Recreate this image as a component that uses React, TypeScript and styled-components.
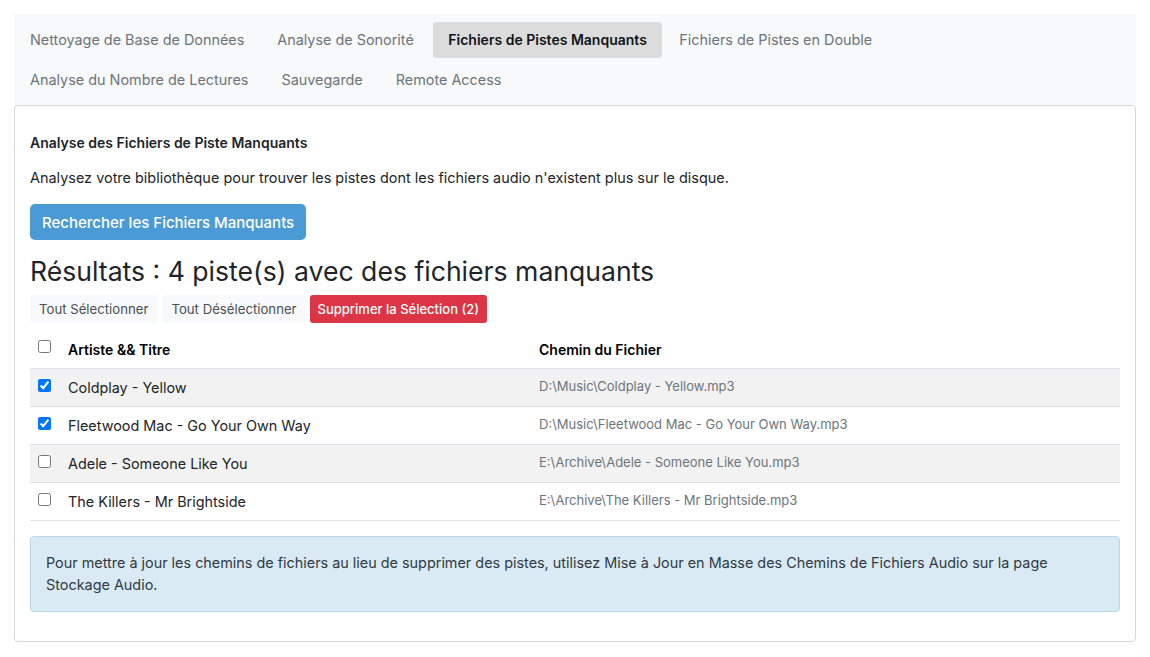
import React from "react";
import styled, { createGlobalStyle } from "styled-components";

const Global = createGlobalStyle`
  html, body { margin: 0; padding: 0; background: #ffffff; }
  body { font-family: Inter, "Noto Sans", "Liberation Sans", sans-serif; color: #212529; font-size: 14px; }
  * { box-sizing: border-box; }
`;

const Page = styled.div`
  padding: 14px 14px 16px 14px;
`;

const TabBar = styled.nav`
  background: #f8f9fa;
  padding: 8px 0 7px 0;
  display: flex;
  flex-direction: column;
  row-gap: 4px;
`;

const TabLine = styled.div`
  display: flex;
  width: 100%;
`;

const Tab = styled.div<{ $active?: boolean }>`
  height: 36px;
  display: flex;
  align-items: center;
  padding: 0 ${(p) => (p.$active ? "15px 1px 15px" : "17px 1px 16px")};
  margin: 0 ${(p) => (p.$active ? "1.5px 0 2.5px" : "0")};
  border-radius: 4px;
  font-size: ${(p) => (p.$active ? "14px" : "14.4px")};
  color: ${(p) => (p.$active ? "#111418" : "#6c757d")};
  font-weight: ${(p) => (p.$active ? 600 : 400)};
  background: ${(p) => (p.$active ? "#dcdcdc" : "transparent")};
  white-space: nowrap;
`;

const Card = styled.section`
  border: 1px solid #d6d8db;
  border-radius: 4px;
  padding: 27px 15px 29px 15px;
  display: flex;
  flex-direction: column;
`;

const Title = styled.h5`
  margin: 0;
  font-size: 14px;
  line-height: 20px;
  font-weight: 600;
  color: #212529;
`;

const Lead = styled.p`
  margin: 15px 0 16px 0;
  font-size: 14.45px;
  line-height: 20px;
  color: #212529;
`;

const PrimaryButton = styled.button`
  align-self: flex-start;
  height: 36px;
  padding: 0 12px;
  border: none;
  border-radius: 5px;
  background: #4a9bd5;
  color: #ffffff;
  font-family: inherit;
  font-size: 15px;
  font-weight: 500;
`;

const ResultsHeading = styled.h3`
  margin: 14px 0 0 0;
  font-size: 26.6px;
  line-height: 34px;
  font-weight: 400;
  color: #212529;
`;

const ButtonRow = styled.div`
  display: flex;
  gap: 5px;
  margin-top: 7px;
`;

const SmallButton = styled.button<{ $danger?: boolean }>`
  height: 28px;
  padding: 0 ${(p) => (p.$danger ? "8px" : "9px")};
  margin-left: ${(p) => (p.$danger ? "-1px" : "0")};
  border: none;
  border-radius: 3px;
  font-family: inherit;
  font-size: ${(p) => (p.$danger ? "13px" : "13.2px")};
  background: ${(p) => (p.$danger ? "#dc3545" : "#f8f9fa")};
  color: ${(p) => (p.$danger ? "#ffffff" : "#495057")};
  font-weight: ${(p) => (p.$danger ? 500 : 400)};
`;

const Table = styled.table`
  margin-top: 7px;
  width: 100%;
  border-collapse: collapse;
`;

const HeadCell = styled.th<{ $w?: string }>`
  text-align: left;
  font-weight: 600;
  font-size: 14px;
  color: #000;
  height: 38px;
  padding: 1px 0 0 8px;
  width: ${(p) => p.$w || "auto"};
  border-bottom: 1px solid #dee2e6;
`;

const Row = styled.tr<{ $striped?: boolean }>`
  background: ${(p) => (p.$striped ? "#f2f2f2" : "#ffffff")};
`;

const Cell = styled.td`
  height: 38px;
  padding: 0 0 0 8px;
  font-size: 14.4px;
  color: #212529;
  border-bottom: 1px solid #dee2e6;
  vertical-align: middle;
`;

const PathCell = styled(Cell)`
  font-size: 13px;
  color: #6c757d;
  padding-bottom: 3px;
`;

const CheckCell = styled.td`
  width: 30px;
  padding: 0 0 0 8px;
  border-bottom: 1px solid #dee2e6;
  vertical-align: middle;
`;

const CheckHead = styled.th`
  width: 30px;
  padding: 0 0 0 8px;
  text-align: left;
  border-bottom: 1px solid #dee2e6;
  vertical-align: middle;
`;

const Check = styled.input`
  margin: 0;
  width: 13px;
  height: 13px;
  display: block;
  position: relative;
  top: -2px;
`;

const Alert = styled.div`
  margin-top: 15px;
  background: #d9eaf5;
  border: 1px solid #b8d7ec;
  border-radius: 4px;
  padding: 15px;
  font-size: 14.4px;
  line-height: 22px;
  color: #2f3a44;
`;

const tabs1 = [
  "Nettoyage de Base de Données",
  "Analyse de Sonorité",
  "Fichiers de Pistes Manquants",
  "Fichiers de Pistes en Double",
];
const tabs2 = ["Analyse du Nombre de Lectures", "Sauvegarde", "Remote Access"];

const rows = [
  { title: "Coldplay - Yellow", path: "D:\\Music\\Coldplay - Yellow.mp3", checked: true },
  { title: "Fleetwood Mac - Go Your Own Way", path: "D:\\Music\\Fleetwood Mac - Go Your Own Way.mp3", checked: true },
  { title: "Adele - Someone Like You", path: "E:\\Archive\\Adele - Someone Like You.mp3", checked: false },
  { title: "The Killers - Mr Brightside", path: "E:\\Archive\\The Killers - Mr Brightside.mp3", checked: false },
];

export default function App() {
  return (
    <>
      <Global />
      <Page>
        <TabBar>
          <TabLine>
            {tabs1.map((t) => (
              <Tab key={t} $active={t === "Fichiers de Pistes Manquants"}>
                {t}
              </Tab>
            ))}
          </TabLine>
          <TabLine>
            {tabs2.map((t) => (
              <Tab key={t}>{t}</Tab>
            ))}
          </TabLine>
        </TabBar>
        <Card>
          <Title>Analyse des Fichiers de Piste Manquants</Title>
          <Lead>
            Analysez votre bibliothèque pour trouver les pistes dont les fichiers audio n'existent plus sur le disque.
          </Lead>
          <PrimaryButton>Rechercher les Fichiers Manquants</PrimaryButton>
          <ResultsHeading>Résultats : 4 piste(s) avec des fichiers manquants</ResultsHeading>
          <ButtonRow>
            <SmallButton>Tout Sélectionner</SmallButton>
            <SmallButton>Tout Désélectionner</SmallButton>
            <SmallButton $danger>Supprimer la Sélection (2)</SmallButton>
          </ButtonRow>
          <Table>
            <thead>
              <tr>
                <CheckHead>
                  <Check type="checkbox" readOnly />
                </CheckHead>
                <HeadCell $w="471px">Artiste &amp;&amp; Titre</HeadCell>
                <HeadCell>Chemin du Fichier</HeadCell>
              </tr>
            </thead>
            <tbody>
              {rows.map((r, i) => (
                <Row key={r.title} $striped={i % 2 === 0}>
                  <CheckCell>
                    <Check type="checkbox" defaultChecked={r.checked} />
                  </CheckCell>
                  <Cell>{r.title}</Cell>
                  <PathCell>{r.path}</PathCell>
                </Row>
              ))}
            </tbody>
          </Table>
          <Alert>
            Pour mettre à jour les chemins de fichiers au lieu de supprimer des pistes, utilisez Mise à Jour en Masse des
            Chemins de Fichiers Audio sur la page Stockage Audio.
          </Alert>
        </Card>
      </Page>
    </>
  );
}
